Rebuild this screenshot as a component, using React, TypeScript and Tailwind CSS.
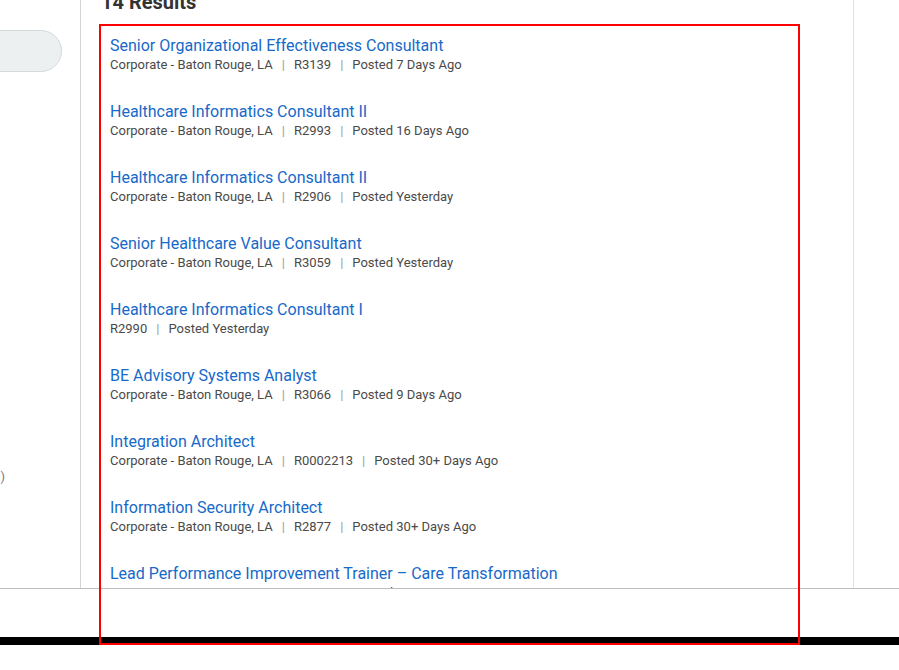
const jobs = [
  { title: "Senior Organizational Effectiveness Consultant", meta: ["Corporate - Baton Rouge, LA", "R3139", "Posted 7 Days Ago"] },
  { title: "Healthcare Informatics Consultant II", meta: ["Corporate - Baton Rouge, LA", "R2993", "Posted 16 Days Ago"] },
  { title: "Healthcare Informatics Consultant II", meta: ["Corporate - Baton Rouge, LA", "R2906", "Posted Yesterday"] },
  { title: "Senior Healthcare Value Consultant", meta: ["Corporate - Baton Rouge, LA", "R3059", "Posted Yesterday"] },
  { title: "Healthcare Informatics Consultant I", meta: ["R2990", "Posted Yesterday"] },
  { title: "BE Advisory Systems Analyst", meta: ["Corporate - Baton Rouge, LA", "R3066", "Posted 9 Days Ago"] },
  { title: "Integration Architect", meta: ["Corporate - Baton Rouge, LA", "R0002213", "Posted 30+ Days Ago"] },
  { title: "Information Security Architect", meta: ["Corporate - Baton Rouge, LA", "R2877", "Posted 30+ Days Ago"] },
  { title: "Lead Performance Improvement Trainer \u2013 Care Transformation", meta: ["Corporate - Baton Rouge, LA", "R3071", "Posted 30+ Days Ago"] },
];

const JobRow = ({ title, meta }: { title: string; meta: string[] }) => (
  <li className="h-[66px]">
    <a className="block text-[16px] leading-5 text-[#1769c9] cursor-pointer">{title}</a>
    <div className="mt-px flex items-center text-[13px] leading-4 text-[#4a4a4a]">
      {meta.map((m, i) => (
        <span key={i} className="flex items-center">
          {i > 0 && <span className="mx-[9px] text-[#9a9a9a]">|</span>}
          {m}
        </span>
      ))}
    </div>
  </li>
);

export default function App() {
  return (
    <div className="relative h-[670px] w-[899px] overflow-hidden bg-white font-['Roboto','Liberation_Sans',sans-serif]">
      {/* Page body */}
      <div className="flex h-[588px] overflow-hidden">
        {/* Facets sidebar */}
        <aside className="w-[81px] shrink-0 border-r border-[#d4d4d4] overflow-hidden">
          <div className="-ml-[200px] mt-[30px] h-[42px] w-[262px] rounded-full border border-[#d5dadd] bg-[#edf0f1]"></div>
          <div className="-ml-[195px] mt-[397px] w-[200px] text-right text-[13px] leading-4 text-[#7a7a7a]">
            Information Technology (9)
          </div>
        </aside>

        {/* Results column */}
        <main className="w-[773px] shrink-0 border-r border-[#e2e2e2] pl-[20px] pr-[54px]">
          <h2 className="-mt-[10px] text-[20px] font-bold leading-6 text-[#333333]">14 Results</h2>
          <ul className="mt-[22px] pl-[9px]">
            {jobs.map((j, i) => (
              <JobRow key={i} title={j.title} meta={j.meta} />
            ))}
          </ul>
        </main>

        <div className="flex-1"></div>
      </div>

      {/* Footer */}
      <div className="h-[49px] border-t border-[#bdbdbd] bg-white"></div>
      <div className="h-2 bg-black"></div>

      {/* Highlight annotation */}
      <div className="pointer-events-none absolute left-[99px] top-[24px] h-[621px] w-[701px] border-2 border-[#ff0000]"></div>
    </div>
  );
}
